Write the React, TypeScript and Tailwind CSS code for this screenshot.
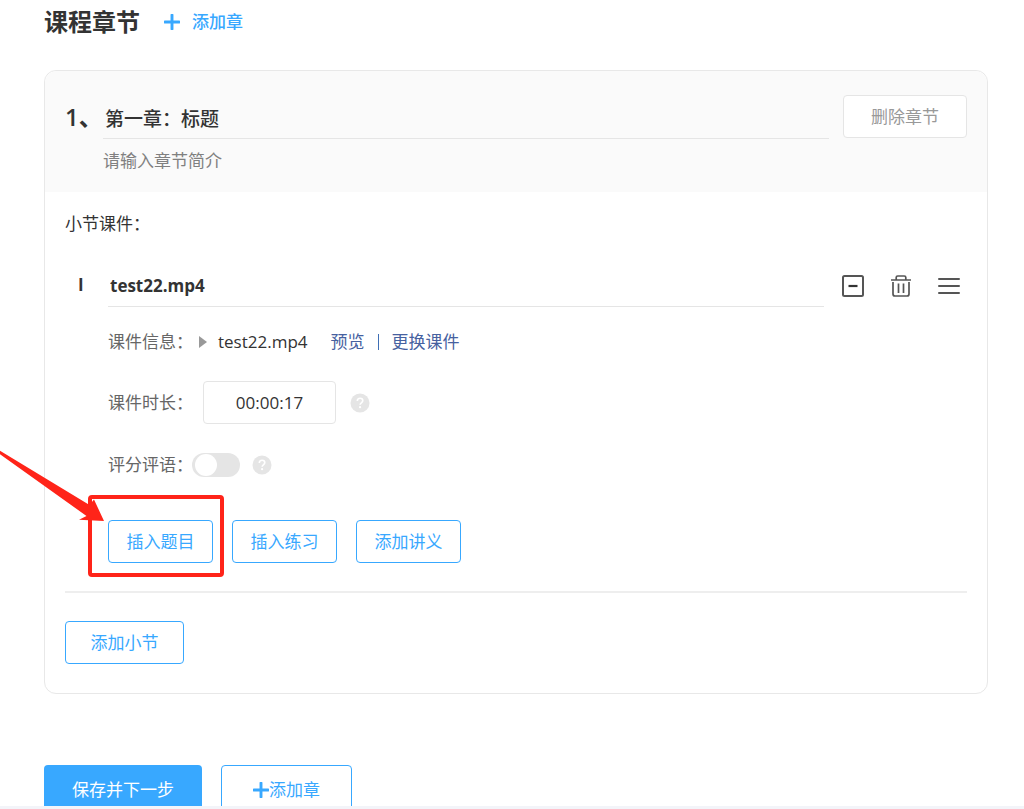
import type { ReactNode } from 'react';

function PlusIcon() {
  return (
    <svg viewBox="0 0 16 16" className="size-4 shrink-0" aria-hidden="true">
      <path d="M8 1V15M1 8H15" stroke="currentColor" strokeWidth="2.9" strokeLinecap="round" fill="none" />
    </svg>
  );
}

function OutlineButton({ children, className }: { children: ReactNode; className: string }) {
  return (
    <button
      type="button"
      className={`flex h-[43px] items-center justify-center rounded border border-[#38a8ff] bg-white text-[#38a8ff] ${className}`}
    >
      {children}
    </button>
  );
}

function HelpButton() {
  return (
    <button type="button" aria-label="帮助" className="size-5 shrink-0">
      <svg viewBox="0 0 20 20" className="size-5" aria-hidden="true">
        <circle cx="10" cy="10" r="9.5" fill="#e5e5e5" />
        <path
          d="M7.3 8C7.3 6.3 8.5 5.3 10.1 5.3C11.7 5.3 12.8 6.3 12.8 7.7C12.8 9.4 10.1 9.7 10.1 11.8"
          stroke="#fff"
          strokeWidth="1.6"
          fill="none"
        />
        <circle cx="10.1" cy="14.2" r="1.1" fill="#fff" />
      </svg>
    </button>
  );
}

function Highlight() {
  return (
    <>
      <span className="pointer-events-none absolute -top-[25px] -right-[11px] -bottom-[14px] -left-5 rounded border-4 border-[#ff2419]" />
      <svg
        viewBox="0 0 108 80"
        className="pointer-events-none absolute -top-[70px] -left-[108px] h-20 w-[108px]"
        aria-hidden="true"
      >
        <path d="M0 0.8L89.5 55L94 49.5L104 71L79 69.8L86.5 66L0 4.2Z" fill="#ff2419" />
      </svg>
    </>
  );
}

export default function App() {
  return (
    <div className="flex h-screen flex-col bg-white font-['Open_Sans','Noto_Sans_CJK_SC',sans-serif] text-[17px] leading-6 text-[#333]">
      <main className="min-h-0 flex-1 overflow-x-hidden overflow-y-auto pr-9 pl-11 [scrollbar-width:none]">
        <header className="flex h-[70px] items-start gap-6 pt-2">
          <h1 className="text-2xl leading-7 font-bold">课程章节</h1>
          <button type="button" className="flex h-7 items-center gap-3 font-medium text-[#38a8ff]">
            <PlusIcon />
            添加章
          </button>
        </header>

        <section className="rounded-xl border border-[#e8e8e8]">
          <div className="flex h-[121px] items-start rounded-t-xl bg-[#fafafa] px-5 pt-6">
            <label htmlFor="chapter" className="w-[38px] shrink-0 pt-1.5 text-2xl font-semibold whitespace-nowrap">
              1、
            </label>
            <div className="min-w-0 flex-1">
              <input
                id="chapter"
                defaultValue="第一章：标题"
                className="block h-11 w-full border-b border-[#e5e5e5] bg-transparent px-0.5 pt-0.5 text-[19px] font-medium outline-none"
              />
              <input
                aria-label="章节简介"
                placeholder="请输入章节简介"
                className="block h-[42px] w-full bg-transparent outline-none placeholder:text-[#808080]"
              />
            </div>
            <button
              type="button"
              className="ml-[14px] flex h-[43px] w-[124px] shrink-0 items-center justify-center rounded border border-[#e5e5e5] bg-white text-[#999]"
            >
              删除章节
            </button>
          </div>

          <div className="px-5 pt-5 pb-[29px]">
            <h2>小节课件：</h2>

            <div className="flex h-[71px] items-end">
              <label htmlFor="lesson" className="flex h-11 w-[43px] items-center pl-[13px] font-bold">
                I
              </label>
              <input
                id="lesson"
                defaultValue="test22.mp4"
                className="h-11 min-w-0 flex-1 border-b border-[#e5e5e5] bg-transparent px-0.5 pt-0.5 font-bold outline-none"
              />
              <div className="ml-[17px] flex h-11 items-center gap-6 pt-0.5 pr-1.5 text-[#555]">
                <button type="button" aria-label="收起">
                  <svg viewBox="0 0 24 24" className="size-6" fill="none" stroke="currentColor" aria-hidden="true">
                    <rect x="2" y="2" width="20" height="20" rx="1.5" strokeWidth="2" />
                    <path d="M7.5 12H16.5" stroke="#333" strokeWidth="2.2" />
                  </svg>
                </button>
                <button type="button" aria-label="删除">
                  <svg viewBox="0 0 24 24" className="size-6" fill="none" stroke="currentColor" strokeWidth="1.7" aria-hidden="true">
                    <path d="M2 6H22M7.2 6V3.5Q7.2 2 8.7 2H15.3Q16.8 2 16.8 3.5V6M4 8V20Q4 22 6 22H18Q20 22 20 20V8M9.5 9.5V19M14.5 9.5V19" />
                  </svg>
                </button>
                <button type="button" aria-label="排序">
                  <svg viewBox="0 0 24 24" className="size-6" fill="none" stroke="currentColor" strokeWidth="2" aria-hidden="true">
                    <path d="M2 5H22M2 12H22M2 19H22" strokeLinecap="round" />
                  </svg>
                </button>
              </div>
            </div>

            <div className="pl-[43px]">
              <div className="mt-[23px] flex items-center">
                <span className="w-[84px] shrink-0 whitespace-nowrap text-[#666]">课件信息：</span>
                <svg viewBox="0 0 8 12" className="ml-[7px] h-3 w-2" aria-hidden="true">
                  <path d="M0 0L8 6L0 12Z" fill="#999" />
                </svg>
                <span className="ml-[11px]">test22.mp4</span>
                <span className="ml-[23px] flex items-center text-[#4661a0]">
                  <a href="#preview">预览</a>
                  <span className="mx-[13px] h-4 w-px bg-[#3f6fb5]" />
                  <a href="#replace">更换课件</a>
                </span>
              </div>

              <div className="mt-[27px] flex items-center">
                <label htmlFor="duration" className="w-[84px] shrink-0 whitespace-nowrap text-[#666]">
                  课件时长：
                </label>
                <input
                  id="duration"
                  defaultValue="00:00:17"
                  className="mr-[14px] ml-[11px] h-[43px] w-[133px] rounded border border-[#e5e5e5] text-center outline-none"
                />
                <HelpButton />
              </div>

              <div className="mt-[29px] flex h-6 items-center">
                <label htmlFor="rating" className="w-[84px] shrink-0 whitespace-nowrap text-[#666]">
                  评分评语：
                </label>
                <input
                  id="rating"
                  type="checkbox"
                  role="switch"
                  className="mr-3 flex h-6 w-12 appearance-none items-center rounded-full bg-[#e5e5e5] px-[3px] before:size-[22px] before:rounded-full before:bg-white checked:justify-end checked:bg-[#38a8ff]"
                />
                <HelpButton />
              </div>

              <div className="mt-[43px] flex gap-[19px]">
                <div className="relative">
                  <OutlineButton className="w-[105px]">插入题目</OutlineButton>
                  <Highlight />
                </div>
                <OutlineButton className="w-[105px]">插入练习</OutlineButton>
                <OutlineButton className="w-[105px]">添加讲义</OutlineButton>
              </div>
            </div>

            <hr className="my-7 border-t-2 border-[#eee]" />
            <OutlineButton className="w-[119px]">添加小节</OutlineButton>
          </div>
        </section>

        <div className="mt-[71px] flex gap-[19px]">
          <button type="button" className="h-[50px] w-[158px] rounded bg-[#38a8ff] text-white">
            保存并下一步
          </button>
          <button
            type="button"
            className="flex h-[50px] w-[131px] items-center justify-center rounded border border-[#38a8ff] text-[#38a8ff]"
          >
            <PlusIcon />
            添加章
          </button>
        </div>
      </main>
      <footer className="h-[3px] shrink-0 bg-[#f3f4f9]" />
    </div>
  );
}
